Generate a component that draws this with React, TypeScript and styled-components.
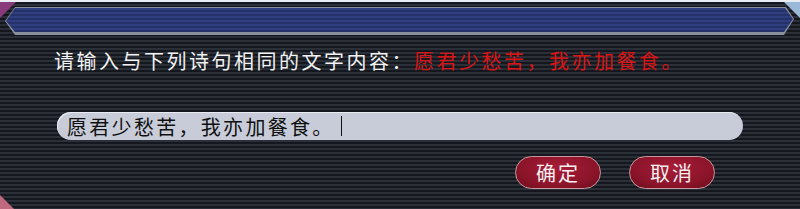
import React from "react";
import styled, { createGlobalStyle } from "styled-components";

const GlobalStyle = createGlobalStyle`
  html, body {
    margin: 0;
    padding: 0;
    background: #1c2027;
  }
`;

const Dialog = styled.div`
  position: relative;
  width: 800px;
  height: 209px;
  overflow: hidden;
  box-sizing: border-box;
  border-top: 2px solid #e8ecf2;
  background: repeating-linear-gradient(
    to bottom,
    #14181e 0px,
    #14181e 2px,
    #2a2f38 2px,
    #2a2f38 4px
  );
  font-family: "Noto Sans CJK SC", "Noto Sans", sans-serif;
  display: flex;
  flex-direction: column;
  padding: 5px 6px 0 5px;
`;

const Corner = styled.div<{ $side: "tl" | "tr" | "bl"; $color: string }>`
  position: absolute;
  width: 16px;
  height: 16px;
  background: ${(p) => p.$color};
  ${(p) =>
    p.$side === "tl"
      ? "top: 0; left: 0; clip-path: polygon(0 0, 100% 0, 0 100%);"
      : p.$side === "tr"
        ? "top: 0; right: 0; clip-path: polygon(0 0, 100% 0, 100% 100%);"
        : "bottom: 0; left: 0; width: 14px; height: 14px; clip-path: polygon(0 0, 100% 100%, 0 100%);"}
`;

const TitleRim = styled.div`
  height: 28px;
  background: #8a909c;
  clip-path: polygon(
    10px 0,
    calc(100% - 8px) 0,
    100% 12px,
    calc(100% - 10px) 100%,
    10px 100%,
    0 14px
  );
  padding: 1px 1px 3px 1px;
  box-sizing: border-box;
`;

const TitleBar = styled.div`
  height: 100%;
  background: repeating-linear-gradient(
    to bottom,
    #2e3e80 0px,
    #2e3e80 2px,
    #243268 2px,
    #243268 4px
  );
  clip-path: polygon(
    9px 0,
    calc(100% - 8px) 0,
    100% 11px,
    calc(100% - 9px) 100%,
    9px 100%,
    0 13px
  );
`;

const Prompt = styled.div`
  margin: 12px 0 0 49px;
  font-size: 20px;
  letter-spacing: 2.5px;
  line-height: 28px;
  color: #f2f2f2;
  white-space: nowrap;
`;

const Verse = styled.span`
  color: #dc1414;
`;

const InputBox = styled.div`
  margin: 37px 0 0 52px;
  width: 686px;
  height: 28px;
  border-radius: 14px;
  background: #c8ccd8;
  box-shadow: inset 1px 1px 0 #e8ebf2;
  display: flex;
  align-items: center;
  padding-left: 10px;
  box-sizing: border-box;
  font-size: 20px;
  letter-spacing: 2.3px;
  color: #101010;
  white-space: nowrap;
`;

const Caret = styled.span`
  display: inline-block;
  width: 1px;
  height: 20px;
  background: #101010;
  margin-left: 6px;
`;

const ButtonRow = styled.div`
  display: flex;
  gap: 28px;
  margin: 16px 0 0 510px;
`;

const Button = styled.div`
  width: 86px;
  height: 33px;
  border-radius: 17px;
  box-sizing: border-box;
  border: 1.5px solid #c89aa0;
  background: radial-gradient(
    ellipse at 50% 35%,
    #a81c38 0%,
    #8a1429 65%,
    #6a0c1e 100%
  );
  color: #f4f0f0;
  font-size: 20px;
  letter-spacing: 2px;
  display: flex;
  align-items: center;
  justify-content: center;
`;

export default function App() {
  return (
    <>
      <GlobalStyle />
      <Dialog>
        <Corner $side="tl" $color="#8a3a7c" />
        <Corner $side="tr" $color="#9ab8d8" />
        <Corner $side="bl" $color="#c06a80" />
        <TitleRim>
          <TitleBar />
        </TitleRim>
        <Prompt>
          请输入与下列诗句相同的文字内容：<Verse>愿君少愁苦，我亦加餐食。</Verse>
        </Prompt>
        <InputBox>
          愿君少愁苦，我亦加餐食。
          <Caret />
        </InputBox>
        <ButtonRow>
          <Button>确定</Button>
          <Button>取消</Button>
        </ButtonRow>
      </Dialog>
    </>
  );
}
